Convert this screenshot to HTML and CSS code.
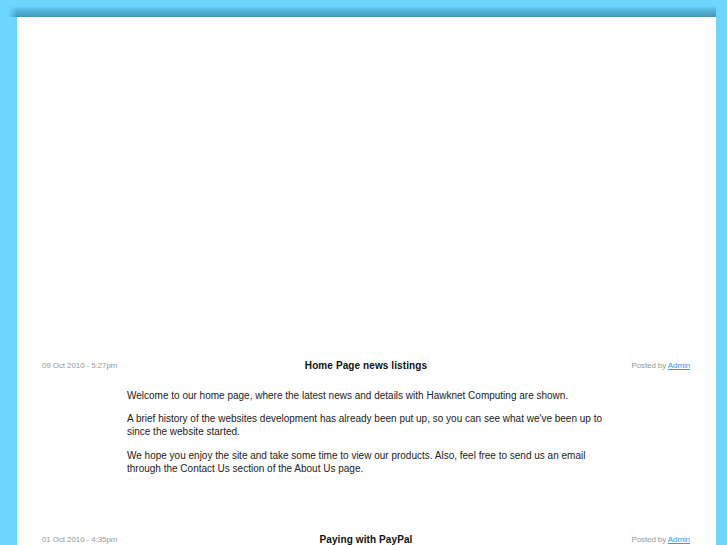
FILE: index.html
```html
<!DOCTYPE html>
<html>
<head>
<meta charset="utf-8">
<link rel="stylesheet" href="styles.css">
</head>
<body>
<div class="page">
  <div class="topbar"></div>
  <div class="container">
    <div class="banner"></div>
    <div class="post">
      <div class="post-head">
        <span class="date">09 Oct 2010 - 5:27pm</span>
        <span class="title">Home Page news listings</span>
        <span class="author">Posted by <a href="#">Admin</a></span>
      </div>
      <div class="post-body">
        <p>Welcome to our home page, where the latest news and details with Hawknet Computing are shown.</p>
        <p>A brief history of the websites development has already been put up, so you can see what we've been up to since the website started.</p>
        <p class="last">We hope you enjoy the site and take some time to view our products. Also, feel free to send us an email through the Contact Us section of the About Us page.</p>
      </div>
    </div>
    <div class="post">
      <div class="post-head">
        <span class="date">01 Oct 2010 - 4:35pm</span>
        <span class="title">Paying with PayPal</span>
        <span class="author">Posted by <a href="#">Admin</a></span>
      </div>
    </div>
  </div>
</div>
</body>
</html>
```
FILE: styles.css
```css
html, body {
  margin: 0;
  padding: 0;
  background: #6dd6ff;
  font-family: "Liberation Sans", Arial, sans-serif;
  color: #222;
}
.page {
  padding-top: 6px;
  height: 539px;
  overflow: hidden;
}
.topbar {
  height: 11px;
  margin-left: 8px;
  width: 708px;
  background: linear-gradient(to bottom, rgba(40,120,150,0) 0%, rgba(40,120,150,0.35) 40%, rgba(50,130,160,0.75) 100%);
  -webkit-mask-image: linear-gradient(to right, transparent 0, #000 9px);
  mask-image: linear-gradient(to right, transparent 0, #000 9px);
}
.container {
  margin-left: 17px;
  width: 699px;
  background: #fff;
  min-height: 600px;
}
.banner {
  height: 340px;
}
.post-head {
  display: flex;
  align-items: center;
  justify-content: space-between;
  padding: 0 26px 0 25px;
  height: 16px;
}
.date, .author {
  font-size: 8px;
  color: #999;
  width: 120px;
  letter-spacing: -0.1px;
}
.author {
  text-align: right;
}
.author a {
  color: #2a9df4;
}
.title {
  font-size: 10px;
  font-weight: bold;
  color: #111;
  letter-spacing: 0.1px;
}
.post-body {
  padding: 16px 96px 46px 110px;
  font-size: 10px;
  line-height: 13px;
}
.post-body p {
  margin: 0 0 10px 0;
}
.post-body p.last {
  margin-top: 11px;
}
```
